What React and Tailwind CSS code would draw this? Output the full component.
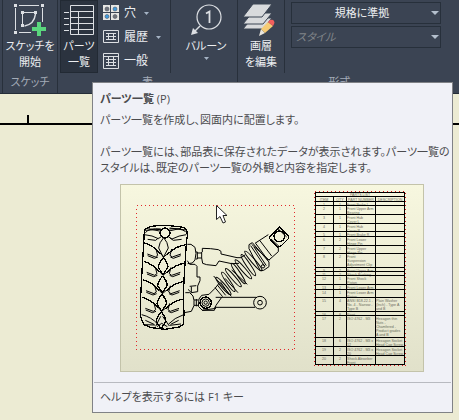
import React from "react";

const INK = "#dcdfe3";

function Caret({ className = "" }) {
  return (
    <svg className={`block h-1 w-2 ${className}`} viewBox="0 0 8 4" aria-hidden="true">
      <path d="M0 0h8L4 4z" fill="#b4bfcd" />
    </svg>
  );
}

function SmallCaret() {
  return (
    <svg className="block h-[3px] w-[5px]" viewBox="0 0 5 3" aria-hidden="true">
      <path d="M0 0h5L2.500 3z" fill="#a5b3c4" />
    </svg>
  );
}

function SketchIcon() {
  return (
    <svg className="block h-9 w-9" viewBox="0 0 36 36" fill="none" aria-hidden="true">
      <path d="M7 3.500h20M3.500 6v22M30.500 6v14M7 30.500h12" stroke={INK} />
      <path d="M10.500 11v11M12 10.500h10" stroke={INK} />
      <path d="M23.500 12c-1 8-5 11-11 12" stroke={INK} strokeWidth="1.500" />
      <path d="M2 2h3v3H2zM29 2h3v3h-3zM2 29h3v3H2zM9 9h3v3H9zM22 9h3v3h-3zM9 22h3v3H9z" fill={INK} />
      <path d="M25 20h4v5h5v4h-5v5h-4v-5h-5v-4h5z" fill="#5ad67d" />
    </svg>
  );
}

function PartsListIcon() {
  return (
    <svg className="block h-9 w-9" viewBox="0 0 36 36" fill="none" stroke={INK} aria-hidden="true">
      <path d="M9.500 3.500h23v29h-23zM9 9.500h24M9 15.500h24M9 21.500h24M9 27.500h24M17.500 10v23" />
      <path d="M3 10.500h5M3 16.500h5M3 22.500h5M3 28.500h5" />
    </svg>
  );
}

function HoleIcon() {
  return (
    <svg className="block h-4 w-4" viewBox="0 0 16 16" aria-hidden="true">
      <path d="M0 0h7v7H0zM8 0h8v7H8zM0 8h7v7H0zM8 8h8v7H8z" fill="#e6e6e4" />
      <g stroke="#4d5563" strokeWidth=".6">
        <circle cx="4" cy="4" r="2" fill="#70737b" />
        <circle cx="12" cy="4" r="2" fill="#3f9ce0" />
        <circle cx="4" cy="11.500" r="2" fill="#3f9ce0" />
        <circle cx="12" cy="11.500" r="2" fill="#70737b" />
      </g>
    </svg>
  );
}

function RevisionIcon() {
  return (
    <svg className="block h-4 w-4" viewBox="0 0 16 16" fill="none" stroke={INK} aria-hidden="true">
      <path d="M.5 1.500h15v12H.5zM3 4.500h10M3 7.500h10M3 10.500h10M5.500 5v6M10.500 5v6" />
    </svg>
  );
}

function GeneralIcon() {
  return (
    <svg className="block h-4 w-4" viewBox="0 0 16 16" fill="none" stroke={INK} aria-hidden="true">
      <path d="M.5.5h15v15H.5zM1 3.500h14M3 6.500h10M3 9.500h10M3 12.500h10M5.500 4v9M10.500 4v9" />
    </svg>
  );
}

function BalloonIcon() {
  return (
    <svg className="block h-9 w-9" viewBox="0 0 36 36" fill="none" aria-hidden="true">
      <circle cx="21" cy="15" r="12" stroke={INK} strokeWidth="1.200" />
      <path d="M12 24l-5 5" stroke={INK} strokeWidth="1.500" />
      <path d="M3 33l2-7 5 5z" fill={INK} />
      <path d="M18 11.500l3.500-2V21" stroke={INK} strokeWidth="1.800" />
    </svg>
  );
}

function LayersIcon() {
  return (
    <svg className="block h-9 w-9" viewBox="0 0 36 36" aria-hidden="true">
      <g fill="#d8dadc" stroke="#3b4453" strokeWidth="1">
        <path d="M0 27l9-11h20l-9 11z" />
        <path d="M0 22l9-11h20l-9 11z" />
        <path d="M0 15L10 2h19L19 15z" />
      </g>
      <path d="M16 34l2-7 4 4z" fill="#e8e5dd" />
      <path d="M18 27l7-7 5 4-8 7z" fill="#f6cb75" />
      <path d="M25 20l2-2q3-1 4 1t0 3l-1 2z" fill="#f25f5d" />
    </svg>
  );
}

function LargeButton({ icon, lines, active, caret }) {
  return (
    <button
      type="button"
      className={`flex h-[73px] w-[38px] flex-col items-center border pt-px ${
        active ? "border-[#222a34] bg-[#2b333f]" : "border-transparent"
      }`}
    >
      {icon}
      <span className="flex flex-col items-center leading-4 whitespace-nowrap">
        {lines.map((t) => (
          <span key={t}>{t}</span>
        ))}
      </span>
      {caret && (
        <span className="mt-[3px]">
          <SmallCaret />
        </span>
      )}
    </button>
  );
}

function SmallButton({ icon, label, caret }) {
  return (
    <button type="button" className="flex h-6 items-center gap-[5px] text-xs whitespace-nowrap">
      {icon}
      <span>{label}</span>
      {caret && (
        <span className="ml-[3px]">
          <SmallCaret />
        </span>
      )}
    </button>
  );
}

function PanelTitle({ children }) {
  return <div className="h-5 pt-px text-center leading-4 text-[#a3abb7]">{children}</div>;
}

function StyleSelect({ label, value, className }) {
  return (
    <div className="relative">
      <select
        aria-label={label}
        defaultValue={value}
        className={`block h-[22px] w-full appearance-none border border-[#27303b] bg-transparent px-1 leading-4 ${className}`}
      >
        <option>{value}</option>
      </select>
      <Caret className="pointer-events-none absolute top-[9px] right-[2px]" />
    </div>
  );
}

const rows = [
  [201.5, "1", "1", ["Front Brake L"], []],
  [205.5, "2", "1", ["Front Upper Arm", "Bearing"], []],
  [214.5, "3", "1", ["Front Hub", "Cover L"], []],
  [223.5, "4", "1", ["Front Hub", "Cover R"], []],
  [231.5, "5", "1", ["Front Brake R"], []],
  [236.5, "6", "2", ["Front Lower", "Hinge Pin"], []],
  [245.5, "7", "2", ["Front Upper", "Hinge Pin"], []],
  [253.5, "8", "2", ["Front", "Suspension", "Adjustment Clip"], []],
  [267.5, "9", "2", ["Front Upper Arm"], []],
  [271.5, "11", "2", ["Shock Bushing"], []],
  [275.5, "12", "1", ["Front Shock", "Piston"], []],
  [284.5, "13", "2", ["Front Lower Arm"], []],
  [289.5, "14", "1", ["Front Lower Arm", "Piston"], []],
  [297.5, "15", "4", ["ANSI B18.22.1 -", "No. 4 - Narrow -", "Type B"], ["Plain Washer", "(Inch) - Type A", "and B"]],
  [311.5, "16", "8", ["Pivot"], []],
  [315.5, "17", "2", ["ISO 4762 - M3"], ["Hexagon thin", "Nuts -", "Chamfered -", "Product grades", "A and B"]],
  [337.5, "18", "6", ["ISO 4762 - M3 x", "12"], ["Hexagon Socket", "Head Cap Screw"]],
  [346.5, "19", "2", ["ISO 4762 - M3 x", "20"], ["Hexagon Socket", "Head Cap Screw"]],
  [355.5, "20", "2", ["Shock Absorber", "Front"], []],
];

function PartsTable() {
  return (
    <g>
      <g fill="#6b6c60" fontSize="3.6" fontFamily="'Liberation Sans', sans-serif">
        <text x="360" y="196" textAnchor="middle">PARTS LIST</text>
        <text x="324" y="200.500" textAnchor="middle">ITEM</text>
        <text x="340" y="200.500" textAnchor="middle">QTY</text>
        <text x="361" y="200.500" textAnchor="middle">PART NUMBER</text>
        <text x="390" y="200.500" textAnchor="middle">DESCRIPTION</text>
        {rows.map(([y, item, qty, part, desc]) => (
          <g key={item}>
            <text x="324" y={y + 4} textAnchor="middle">{item}</text>
            <text x="340" y={y + 4} textAnchor="middle">{qty}</text>
            {part.map((t, i) => (
              <text key={t} x="347" y={y + 4 + i * 4}>{t}</text>
            ))}
            {desc.map((t, i) => (
              <text key={t} x="376" y={y + 4 + i * 4}>{t}</text>
            ))}
          </g>
        ))}
      </g>
      <g shapeRendering="crispEdges">
        <path
          d={"M315 192.5H405M315 196.500H405M315 364.500H405" + rows.map((r) => `M315 ${r[0]}H405`).join("")}
          stroke="#000"
        />
        <path d="M315.500 192V365M333.500 196V365M346.500 196V365M375.500 196V365M404.500 192V365" stroke="#000" />
        <path d="M314.500 191.500H405.500V365.500H314.500z" stroke="#d8191c" strokeDasharray="1 3" />
      </g>
    </g>
  );
}

const treads = [
  [0, 0],
  [-2, 55],
  [-4, 110],
  [-6, 163],
];

const coils = [0, 1, 2, 3, 4, 5, 6];

function Suspension() {
  return (
    <g transform="translate(115 180) scale(.33333)" stroke="#000" strokeWidth="3" strokeLinejoin="round">
      {/* tyre */}
      <path strokeWidth="4" d="M88 152Q92 142 118 138Q150 134 198 141Q214 144 216 154L217 166L214 190L210 250L207 300L205 350L207 400L205 432L194 441L150 448L110 443L86 434L77 410V350L80 290L83 240L86 190z" />
      <path d="M91 158q12-15 46-11M163 147q32-4 49 8M90 151l48-3M164 144l48 6M100 146l38 8M162 153l36-8" />
      <circle cx="150" cy="159" r="15" strokeWidth="4" />
      <path d="M88 164q25 2 42 12l10-7M214 164q-22 2-43 13l-11-7M98 178l24 3 8-7M200 178l-25 3-10-7" />
      <path d="M146 173q-14 15-15 31l14 28 15-28q-2-18-14-31" />
      {treads.map(([dx, dy]) => (
        <g key={dy} transform={`translate(${dx} ${dy})`}>
          <path strokeWidth="4" d="M88 189q28 8 48 32M213 194q-31 4-57 30" />
          <path d="M97 222l24 9 7-5-5-19M198 222l-26 9-7-5 5-19" />
          <path d="M98 227l20 8 11-4M197 227l-22 8-9-4M137 221l9 10 11-9" />
          <path strokeWidth="4" d="M145 233q-14 15-15 29l14 22 15-23q-2-15-14-28" />
        </g>
      ))}
      <path d="M80 404q29 7 48 28M204 405q-25 8-43 27M91 421l26 12M191 421l-24 12M137 409l-15 30M143 409l20 29M126 440l14-10 17 10M88 434l32 1M164 436l34-4" />
      {/* hubs and knuckle */}
      <path d="M217 193h11l12 9 3 18-3 20-8 9-14 2M217 242l7 11h16l6 6v32h9v11l-7 16v17l-19 3-10-10M224 319l20-2M229 320v18M211 338h13l10 10 3 13v16l-8 17-21 4" />
      <path d="M243 216h4v21h-4M247 219h13M247 234h13M237 360h13M237 376h13M244 357v22" />
      {/* upper arm */}
      <path d="M262 216v-11l25 1 23 3 8 5v8l48 11h12l12-8M260 216v18l3 16 12 4 28 3 9-14 38 8 22-1" />
      {/* lower arm */}
      <path d="M302 352h123M298 382h122M252 357l8-11 22-3 18-18 12-15M252 357l-2 22 12 12h36l5-15 17-24M261 391l42 -6" />
      <circle cx="272" cy="368" r="17" strokeWidth="4" />
      <circle cx="272" cy="368" r="11" />
      <circle cx="272" cy="368" r="5" />
      <circle cx="435" cy="368" r="19" />
      <circle cx="435" cy="368" r="7" />
      {/* damper */}
      <path d="M300 323l23 27M307 315l25 31M316 305l27 39M296 288l53 61M330 295l39 43M350 270l47 43" />
      {coils.map((i) => (
        <ellipse
          key={i}
          cx={325 + i * 15}
          cy={318 - i * 12.5}
          rx={34 + i * 0.8}
          ry="6"
          transform={`rotate(${i % 2 ? 56 : 49} ${325 + i * 15} ${318 - i * 12.5})`}
        />
      ))}
      <path d="M412 188l-10 6v12l34 66 10-1 16-11v-14zM407 197l42 62M417 201l37 56M420 190l40-26M462 240l28-25v-16M422 190l37 51M434 181l36 47M410 193l53 48" />
      <circle cx="444" cy="259" r="5" />
      <path strokeWidth="4" d="M493 140l27 27v9l-22 22-10 3-26-27z" />
      <path d="M489 146l26 25M468 177l24 22" />
      <circle cx="493" cy="169" r="16" strokeWidth="4" />
    </g>
  );
}

function Illustration() {
  return (
    <figure className="mr-7 ml-[27px] border border-[#c3c3aa] bg-linear-to-b from-[#f7f7df] to-[#e1e1ca]">
      <svg viewBox="121 185 302 186" className="block w-full" fill="none" role="img" aria-label="パーツ一覧">
        <g shapeRendering="crispEdges">
          <path d="M136.500 205.500H294.500V349.500H136.500z" stroke="#e2282a" strokeDasharray="1 3" />
          <Suspension />
        </g>
        <PartsTable />
        <path
          d="M216.500 205.500v14l3.500-3 3 6.500 2.500-1-2.500-6.500h4z"
          fill="#fff"
          stroke="#222"
        />
      </svg>
    </figure>
  );
}

function Tooltip() {
  return (
    <div
      role="tooltip"
      className="absolute top-[82px] right-[6px] left-[92px] border border-[#808286] bg-[#f0f1f7] text-[#4b4b4e]"
    >
      <div className="px-[7px] pt-2">
        <p className="leading-4">
          <strong className="font-bold">パーツ一覧</strong> (P)
        </p>
        <p className="mt-[5px] leading-4">パーツ一覧を作成し、図面内に配置します。</p>
        <p className="mt-4 leading-4 whitespace-nowrap">
          パーツ一覧には、部品表に保存されたデータが表示されます。パーツ一覧の
          <br />
          スタイルは、既定のパーツ一覧の外観と内容を指定します。
        </p>
      </div>
      <div className="mt-2">
        <Illustration />
      </div>
      <p className="mx-px mt-[10px] border-t border-[#b8bac0] px-[6px] pt-[6px] pb-[7px] leading-4">
        ヘルプを表示するには F1 キー
      </p>
    </div>
  );
}

export default function App() {
  return (
    <div className="relative min-h-screen overflow-hidden bg-[#ecebd3] font-['Open_Sans','Noto_Sans_CJK_JP',sans-serif] text-[11px] [font-feature-settings:'palt']">
      <header className="flex border-b border-[#252d38] bg-[#3b4453] pl-[2px] text-[#eceef1]">
        <section className="w-14 shrink-0 border-x border-[#28303b]">
          <div className="flex justify-center">
            <LargeButton icon={<SketchIcon />} lines={["スケッチを", "開始"]} />
          </div>
          <PanelTitle>スケッチ</PanelTitle>
        </section>
        <section className="w-[180px] shrink-0 border-r border-[#28303b]">
          <div className="flex pl-[2px]">
            <LargeButton icon={<PartsListIcon />} lines={["パーツ", "一覧"]} active />
            <div className="ml-[5px] flex w-[67px] flex-col pt-px">
              <SmallButton icon={<HoleIcon />} label="穴" caret />
              <SmallButton icon={<RevisionIcon />} label="履歴" caret />
              <SmallButton icon={<GeneralIcon />} label="一般" />
            </div>
            <div className="flex flex-1 justify-center border-l border-[#28303b] pl-1">
              <LargeButton icon={<BalloonIcon />} lines={["バルーン"]} caret />
            </div>
          </div>
          <PanelTitle>表</PanelTitle>
        </section>
        <section className="w-[203px]">
          <div className="flex">
            <div className="flex w-[47px] justify-center border-r border-[#28303b]">
              <LargeButton icon={<LayersIcon />} lines={["画層", "を編集"]} />
            </div>
            <div className="ml-[6px] flex flex-1 flex-col gap-[2px] pt-[2px]">
              <StyleSelect label="規格" value="規格に準拠" className="pr-3 [text-align-last:center]" />
              <StyleSelect label="スタイル" value="スタイル" className="text-[#808489] italic" />
            </div>
          </div>
          <PanelTitle>形式</PanelTitle>
        </section>
      </header>
      <main className="pt-[21px]">
        <div className="ml-[27px] h-2 w-[2px] bg-black" />
        <div className="h-[2px] bg-black" />
      </main>
      <Tooltip />
    </div>
  );
}
